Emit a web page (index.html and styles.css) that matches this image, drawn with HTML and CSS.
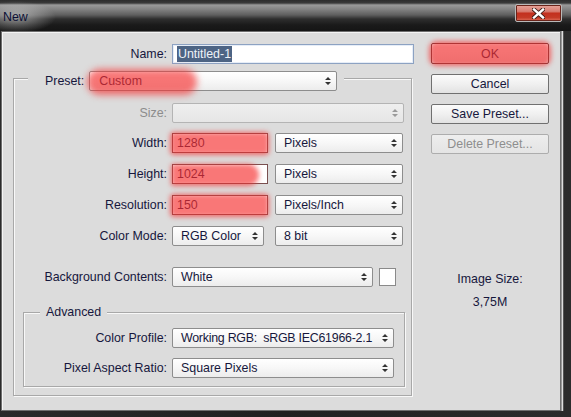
FILE: index.html
```html
<!DOCTYPE html>
<html>
<head>
<meta charset="utf-8">
<title>New</title>
<link rel="stylesheet" href="styles.css">
</head>
<body>
<div class="window">
  <div class="titlebar">
    <span class="title">New</span>
    <div class="close">
      <svg width="13" height="11" viewBox="0 0 13 11">
        <path d="M2 1.5 L11 9.5 M11 1.5 L2 9.5" stroke="#3a1a14" stroke-width="4.2" stroke-linecap="square"/>
        <path d="M2 1.5 L11 9.5 M11 1.5 L2 9.5" stroke="#ffffff" stroke-width="2.4" stroke-linecap="square"/>
      </svg>
    </div>
  </div>
  <div class="panel">
    <div class="main">
      <div class="row name-row">
        <span class="lbl lbl-top">Name:</span>
        <div class="input name-input"><span class="selected">Untitled-1</span></div>
      </div>

      <div class="group">
        <div class="group-head">
          <span class="head-lbl">Preset:</span>
          <div class="select preset hl hl-preset"><span class="val">Custom</span><svg class="arr" width="6" height="8" viewBox="0 0 6 8"><path d="M0 3 L3 0 L6 3 Z M0 5 L3 8 L6 5 Z" fill="#333"/></svg></div>
        </div>

        <div class="row size-row">
          <span class="lbl lbl-g dis">Size:</span>
          <div class="select dis-select w-full"><span class="val"></span><svg class="arr" width="6" height="8" viewBox="0 0 6 8"><path d="M0 3 L3 0 L6 3 Z M0 5 L3 8 L6 5 Z" fill="#9a9a9a"/></svg></div>
        </div>

        <div class="row r10">
          <span class="lbl lbl-g">Width:</span>
          <div class="input num hl hl-full"><span>1280</span></div>
          <div class="select unit"><span class="val">Pixels</span><svg class="arr" width="6" height="8" viewBox="0 0 6 8"><path d="M0 3 L3 0 L6 3 Z M0 5 L3 8 L6 5 Z" fill="#333"/></svg></div>
        </div>

        <div class="row r11">
          <span class="lbl lbl-g">Height:</span>
          <div class="input num hl hl-part"><span>1024</span></div>
          <div class="select unit"><span class="val">Pixels</span><svg class="arr" width="6" height="8" viewBox="0 0 6 8"><path d="M0 3 L3 0 L6 3 Z M0 5 L3 8 L6 5 Z" fill="#333"/></svg></div>
        </div>

        <div class="row r11">
          <span class="lbl lbl-g">Resolution:</span>
          <div class="input num hl hl-full"><span>150</span></div>
          <div class="select unit"><span class="val">Pixels/Inch</span><svg class="arr" width="6" height="8" viewBox="0 0 6 8"><path d="M0 3 L3 0 L6 3 Z M0 5 L3 8 L6 5 Z" fill="#333"/></svg></div>
        </div>

        <div class="row r11">
          <span class="lbl lbl-g">Color Mode:</span>
          <div class="select mode"><span class="val">RGB Color</span><svg class="arr" width="6" height="8" viewBox="0 0 6 8"><path d="M0 3 L3 0 L6 3 Z M0 5 L3 8 L6 5 Z" fill="#333"/></svg></div>
          <div class="select unit"><span class="val">8 bit</span><svg class="arr" width="6" height="8" viewBox="0 0 6 8"><path d="M0 3 L3 0 L6 3 Z M0 5 L3 8 L6 5 Z" fill="#333"/></svg></div>
        </div>

        <div class="row bg-row">
          <span class="lbl lbl-g">Background Contents:</span>
          <div class="select bgsel"><span class="val">White</span><svg class="arr" width="6" height="8" viewBox="0 0 6 8"><path d="M0 3 L3 0 L6 3 Z M0 5 L3 8 L6 5 Z" fill="#333"/></svg></div>
          <div class="swatch"></div>
        </div>

        <div class="adv">
          <div class="adv-head">Advanced</div>
          <div class="row cp-row">
            <span class="lbl lbl-a">Color Profile:</span>
            <div class="select advsel"><span class="val tight">Working RGB:&nbsp; sRGB IEC61966-2.1</span><svg class="arr" width="6" height="8" viewBox="0 0 6 8"><path d="M0 3 L3 0 L6 3 Z M0 5 L3 8 L6 5 Z" fill="#333"/></svg></div>
          </div>
          <div class="row r10">
            <span class="lbl lbl-a">Pixel Aspect Ratio:</span>
            <div class="select advsel"><span class="val">Square Pixels</span><svg class="arr" width="6" height="8" viewBox="0 0 6 8"><path d="M0 3 L3 0 L6 3 Z M0 5 L3 8 L6 5 Z" fill="#333"/></svg></div>
          </div>
        </div>
      </div>
    </div>

    <div class="side">
      <div class="btn ok hl hl-ok"><span>OK</span></div>
      <div class="btn">Cancel</div>
      <div class="btn">Save Preset...</div>
      <div class="btn disabled">Delete Preset...</div>
      <div class="imgsize">Image Size:</div>
      <div class="imgval">3,75M</div>
    </div>
  </div>
</div>
</body>
</html>
```

FILE: styles.css
```css
html, body {
  margin: 0;
  padding: 0;
}
body {
  width: 571px;
  height: 417px;
  overflow: hidden;
  background: linear-gradient(90deg, #2a2a2a 0, #202020 50%, #2c2c2c 100%);
  font-family: "Liberation Sans", Arial, sans-serif;
  font-size: 12.4px;
  color: #16173c;
}
.window {
  width: 571px;
  height: 417px;
}

/* Title bar */
.titlebar {
  height: 31px;
  display: flex;
  justify-content: space-between;
  align-items: flex-start;
  background:
    radial-gradient(ellipse 40px 16px at 16px 17px, rgba(235,235,235,0.55), rgba(235,235,235,0) 100%),
    linear-gradient(180deg, #2c2c2c 0, #3a3a3a 3px, #9a9a9a 5px, #7e7e7e 10px, #5e5e5e 15px, #2e2e2e 19px, #1a1a1a 25px, #151515 31px);
}
.title {
  margin: 10px 0 0 3px;
  line-height: 15px;
  font-size: 12.4px;
  color: #0c1034;
}
.close {
  margin: 4px 9px 0 0;
  width: 45px;
  height: 16px;
  border: 1px solid #b9b9b9;
  box-shadow: inset 0 0 0 1px #6a241a;
  border-radius: 2px;
  background: linear-gradient(180deg, #e7a69c 0, #d77c70 40%, #c3301e 52%, #c43a26 78%, #e0705c 100%);
  display: flex;
  justify-content: center;
  align-items: center;
}

/* Panel */
.panel {
  margin-left: 1px;
  width: 558px;
  height: 378px;
  border: 1px solid #6e6e6e;
  background: #dcdcdc;
  box-shadow: inset 1px 1px 0 #f4f4f4, 1px 0 0 #9a9a9a, 2px 0 0 #dedede, 3px 0 0 #555;
  display: flex;
  align-items: flex-start;
}
.main {
  width: 429px;
  flex: none;
}

.row {
  display: flex;
  align-items: center;
  height: 20px;
}
.lbl {
  flex: none;
  text-align: right;
  line-height: 20px;
  margin-right: 5px;
  white-space: nowrap;
}
.lbl-top { width: 165px; }
.lbl-g { width: 153px; }
.lbl-a { width: 143px; }
.dis { color: #8c8c8c; }

.name-row { margin-top: 12px; }
.size-row { margin-top: 12px; }
.r10 { margin-top: 10px; }
.r11 { margin-top: 11px; }
.bg-row { margin-top: 21px; }
.cp-row { margin-top: 8px; }

/* Inputs */
.input {
  box-sizing: border-box;
  height: 20px;
  border: 1px solid #8a8a8a;
  background: #fff;
  display: flex;
  align-items: center;
  padding-left: 4px;
  line-height: 16px;
}
.name-input {
  width: 242px;
  border-color: #8da2c2;
  box-shadow: inset 0 0 0 1px #e6edf7;
}
.selected {
  background: #4d6484;
  color: #eef2f8;
  padding: 0 1px;
  line-height: 16px;
}
.num {
  width: 96px;
  margin-right: 7px;
  border-color: #7a5050;
}

/* Selects */
.select {
  box-sizing: border-box;
  height: 20px;
  border: 1px solid #8d8d8d;
  border-radius: 2px;
  background: linear-gradient(180deg, #ffffff 0, #f7f7f7 50%, #ececec 100%);
  display: flex;
  align-items: center;
  justify-content: space-between;
  padding: 0 5px 0 8px;
  white-space: nowrap;
}
.tight { letter-spacing: -0.25px; }
.arr { flex: none; }
.dis-select {
  background: linear-gradient(180deg, #efefef 0, #e6e6e6 100%);
  border-color: #b4b4b4;
}
.w-full { width: 232px; }
.unit { width: 128px; }
.mode { width: 92px; margin-right: 11px; }
.bgsel { width: 201px; margin-right: 6px; }
.advsel { width: 222px; }
.preset { width: 248px; padding-left: 9px; }

.swatch {
  width: 15px;
  height: 16px;
  border: 1px solid #8a8a8a;
  background: #fff;
}

/* Group boxes */
.group {
  margin: 14px 0 0 11px;
  width: 397px;
  border: 1px solid #a8a8a8;
  box-shadow: inset 1px 1px 0 #f8f8f8, 1px 1px 0 #f8f8f8;
  padding-bottom: 8px;
}
.group-head {
  display: flex;
  align-items: center;
  width: fit-content;
  margin: -8px 0 0 14px;
  padding: 0 7px 0 17px;
  background: #dcdcdc;
  height: 20px;
}
.head-lbl {
  margin-right: 5px;
  line-height: 20px;
}
.adv {
  margin: 25px 0 0 9px;
  width: 380px;
  border: 1px solid #a8a8a8;
  box-shadow: inset 1px 1px 0 #f8f8f8, 1px 1px 0 #f8f8f8;
  padding-bottom: 8px;
}
.adv-head {
  width: fit-content;
  margin: -8px 0 0 16px;
  padding: 0 6px;
  height: 15px;
  line-height: 15px;
  background: #dcdcdc;
}

/* Side buttons */
.side {
  width: 118px;
  margin-top: 11px;
  display: flex;
  flex-direction: column;
  align-items: center;
}
.btn {
  box-sizing: border-box;
  width: 118px;
  height: 20px;
  margin-top: 10px;
  border: 1px solid #707070;
  border-radius: 2px;
  background: linear-gradient(180deg, #fbfbfb 0, #f0f0f0 50%, #e2e2e2 100%);
  display: flex;
  justify-content: center;
  align-items: center;
  line-height: 16px;
}
.btn.ok {
  margin-top: 0;
  height: 21px;
  border-color: #5a3a3a;
}
.btn.disabled {
  color: #8e8e8e;
  border-color: #adadad;
  background: linear-gradient(180deg, #eeeeee 0, #e4e4e4 100%);
}
.imgsize {
  margin-top: 118px;
  line-height: 15px;
}
.imgval {
  margin-top: 8px;
  line-height: 15px;
}

/* Highlighter marks */
.hl { position: relative; }
.hl::after {
  content: "";
  position: absolute;
  pointer-events: none;
  background: rgba(246, 48, 48, 0.66);
}
.hl-ok::after {
  left: -3px; right: -3px; top: -3px; bottom: -3px;
  border-radius: 8px;
  filter: blur(2.5px);
}
.hl-preset::after {
  left: -3px; top: -3px;
  width: 110px; height: 26px;
  border-radius: 13px;
  filter: blur(3.5px);
}
.hl-full::after {
  left: -3px; right: -2px; top: -2px; bottom: -3px;
  border-radius: 4px;
  filter: blur(2.5px);
}
.hl-part::after {
  left: -2px; top: -1px;
  width: 88px; height: 22px;
  border-radius: 2px 11px 11px 2px;
  filter: blur(2.5px);
}
```
